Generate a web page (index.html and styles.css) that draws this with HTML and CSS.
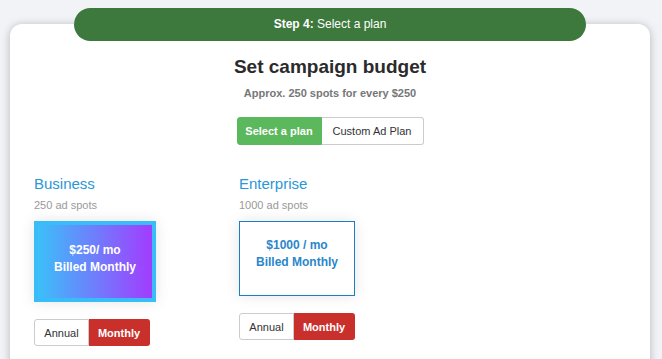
FILE: index.html
```html
<!DOCTYPE html>
<html lang="en">
<head>
    <meta charset="UTF-8">
    <meta name="viewport" content="width=device-width, initial-scale=1.0">
    <title>Select a plan</title>
    <link rel="stylesheet" href="styles.css">
</head>
<body>
    <div id="wizard-card">
        <div id="step-pill"><b>Step 4:</b> Select a plan</div>
        <h1>Set campaign budget</h1>
        <p id="subtitle">Approx. 250 spots for every $250</p>
        <div class="btn-group" id="plan-switch">
            <button class="btn btn-green">Select a plan</button>
            <button class="btn btn-plain">Custom Ad Plan</button>
        </div>
        <div id="plans">
            <div class="plan">
                <h3 class="plan-name">Business</h3>
                <p class="plan-spots">250 ad spots</p>
                <div class="price-box selected">
                    $250/ mo<br>Billed Monthly
                </div>
                <div class="btn-group billing">
                    <button class="btn btn-plain">Annual</button>
                    <button class="btn btn-red">Monthly</button>
                </div>
            </div>
            <div class="plan">
                <h3 class="plan-name">Enterprise</h3>
                <p class="plan-spots">1000 ad spots</p>
                <div class="price-box">
                    $1000 / mo<br>Billed Monthly
                </div>
                <div class="btn-group billing">
                    <button class="btn btn-plain">Annual</button>
                    <button class="btn btn-red">Monthly</button>
                </div>
            </div>
            <div class="plan"></div>
        </div>
    </div>
</body>
</html>
```

FILE: styles.css
```css
body {
    margin: 0;
    padding: 24px 12px 0 10px;
    background-color: #f2f3f7;
    font-family: "Liberation Sans", Arial, sans-serif;
    color: #333;
    overflow: hidden;
}
#wizard-card {
    position: relative;
    background-color: #fff;
    border-radius: 12px;
    box-shadow: 0 1px 8px rgba(0, 0, 0, 0.25);
    padding: 32px 24px 40px 24px;
    min-height: 400px;
    box-sizing: border-box;
    display: flex;
    flex-direction: column;
    align-items: center;
}
#step-pill {
    position: absolute;
    top: -16px;
    left: 64px;
    width: 512px;
    height: 33px;
    line-height: 33px;
    border-radius: 17px;
    background-color: #3d783d;
    color: #fff;
    font-size: 12px;
    text-align: center;
}
h1 {
    font-size: 19px;
    line-height: 22px;
    margin: 0;
    color: #2b2b2b;
}
#subtitle {
    font-size: 11px;
    line-height: 16px;
    font-weight: bold;
    color: #777;
    margin: 7px 0 0 0;
}
.btn-group {
    display: flex;
}
#plan-switch {
    margin-top: 16px;
}
.btn {
    font-family: inherit;
    font-size: 11px;
    height: 28px;
    padding: 0;
    white-space: nowrap;
    border: 1px solid #ccc;
    background-color: #fff;
    color: #333;
    cursor: pointer;
    box-sizing: border-box;
}
.btn-group .btn:first-child {
    border-radius: 3px 0 0 3px;
}
.btn-group .btn:last-child {
    border-radius: 0 3px 3px 0;
    border-left: none;
}
.btn-green {
    background-color: #5cb85c;
    border-color: #5cb85c;
    color: #fff;
    font-weight: bold;
    width: 85px;
}
#plan-switch .btn-plain {
    width: 102px;
}
#plans {
    align-self: stretch;
    display: grid;
    grid-template-columns: 205px 205px 205px;
    margin-top: 29px;
}
.plan-name {
    font-size: 15px;
    line-height: 20px;
    font-weight: normal;
    color: #2a97d6;
    margin: 0;
}
.plan-spots {
    font-size: 11px;
    line-height: 15px;
    color: #999;
    margin: 4px 0 0 0;
}
.price-box {
    width: 116px;
    height: 75px;
    padding-top: 15px;
    box-sizing: border-box;
    margin-top: 8px;
    border: 1px solid #1b7fc1;
    color: #2a86cb;
    font-size: 12px;
    line-height: 17px;
    font-weight: bold;
    text-align: center;
    box-shadow: 0 0 14px rgba(0, 0, 0, 0.1);
}
.price-box.selected {
    border: 4px solid #38bdf8;
    background: linear-gradient(to right, #3cbff9, #a23cff);
    color: #fff;
    width: 122px;
    height: 81px;
    padding-top: 17px;
}
.billing {
    margin-top: 17px;
}
.billing .btn {
    height: 27px;
}
.billing .btn-plain {
    width: 55px;
}
.btn-red {
    background-color: #c9302c;
    border-color: #c9302c;
    color: #fff;
    font-weight: bold;
    width: 61px;
}
```
